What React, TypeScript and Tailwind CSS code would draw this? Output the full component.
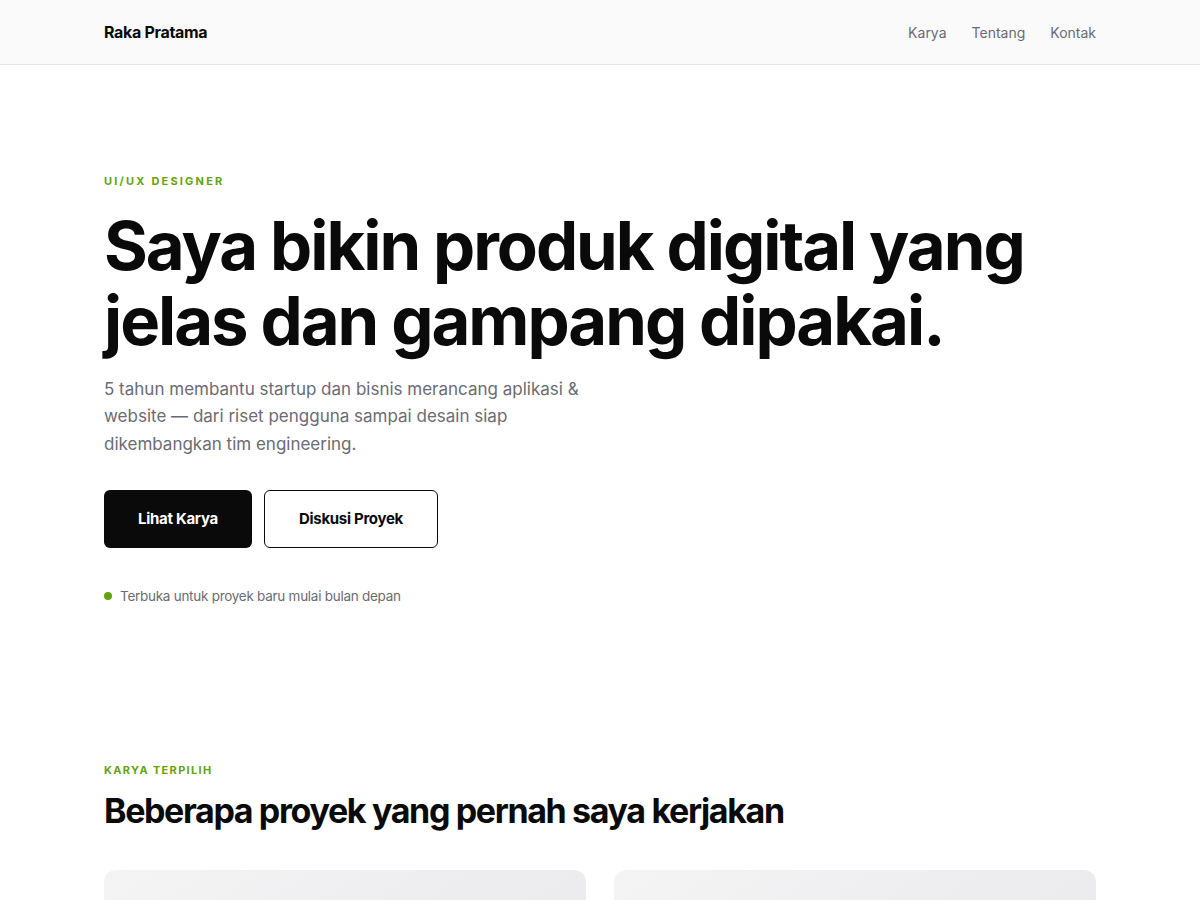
const font = { fontFamily: 'Inter, "Liberation Sans", sans-serif' }

const Nav = () => (
  <header className="h-[65px] border-b border-[#e5e5e5] bg-[#fafafa]">
    <div className="mx-auto flex h-full max-w-5xl items-center justify-between px-4">
      <span className="text-[16px] font-bold tracking-[-0.02em] text-[#0a0a0a]">Raka Pratama</span>
      <nav className="flex items-center gap-[25px] text-[14px] text-[#6b6b73]">
        <a href="#karya">Karya</a>
        <a href="#tentang">Tentang</a>
        <a href="#kontak">Kontak</a>
      </nav>
    </div>
  </header>
)

const Hero = () => (
  <section className="mx-auto max-w-5xl px-4 pt-[108px] pb-[156px]">
    <p className="text-[11px] font-bold tracking-[0.2em] text-[#65a30d]">UI/UX DESIGNER</p>
    <h1 className="mt-[18px] text-[67px] font-bold leading-[75px] tracking-[-0.03em] text-[#0a0a0a]">
      Saya bikin produk digital yang
      <br />
      jelas dan gampang dipakai.
    </h1>
    <p className="mt-[18px] max-w-[490px] text-[17px] leading-[27.5px] text-[#6b6b73]">
      5 tahun membantu startup dan bisnis merancang aplikasi &amp; website — dari riset pengguna sampai desain siap
      dikembangkan tim engineering.
    </p>
    <div className="mt-[32px] flex gap-3">
      <button className="h-[58px] w-[148px] rounded-md bg-[#0a0a0a] text-[15px] font-bold tracking-[-0.02em] text-white">
        Lihat Karya
      </button>
      <button className="h-[58px] w-[174px] rounded-md border border-[#0a0a0a] bg-white text-[15px] font-bold tracking-[-0.02em] text-[#0a0a0a]">
        Diskusi Proyek
      </button>
    </div>
    <div className="mt-[38px] flex items-center gap-2 text-[13.5px] tracking-[-0.02em] text-[#6b6b73]">
      <span className="h-2 w-2 rounded-full bg-[#65a30d]" />
      Terbuka untuk proyek baru mulai bulan depan
    </div>
  </section>
)

const Work = () => (
  <section id="karya" className="mx-auto max-w-5xl px-4">
    <p className="text-[11px] font-bold tracking-[0.12em] text-[#65a30d]">KARYA TERPILIH</p>
    <h2 className="mt-[10px] text-[34px] font-bold leading-[44px] tracking-[-0.04em] text-[#0a0a0a]">
      Beberapa proyek yang pernah saya kerjakan
    </h2>
    <div className="mt-[37px] grid grid-cols-2 gap-7">
      <div className="h-[300px] rounded-xl bg-gradient-to-br from-[#f4f4f5] to-[#e4e4e7]" />
      <div className="h-[300px] rounded-xl bg-gradient-to-br from-[#f4f4f5] to-[#e4e4e7]" />
    </div>
  </section>
)

export default function App() {
  return (
    <div className="min-h-screen bg-white" style={font}>
      <Nav />
      <Hero />
      <Work />
    </div>
  )
}
